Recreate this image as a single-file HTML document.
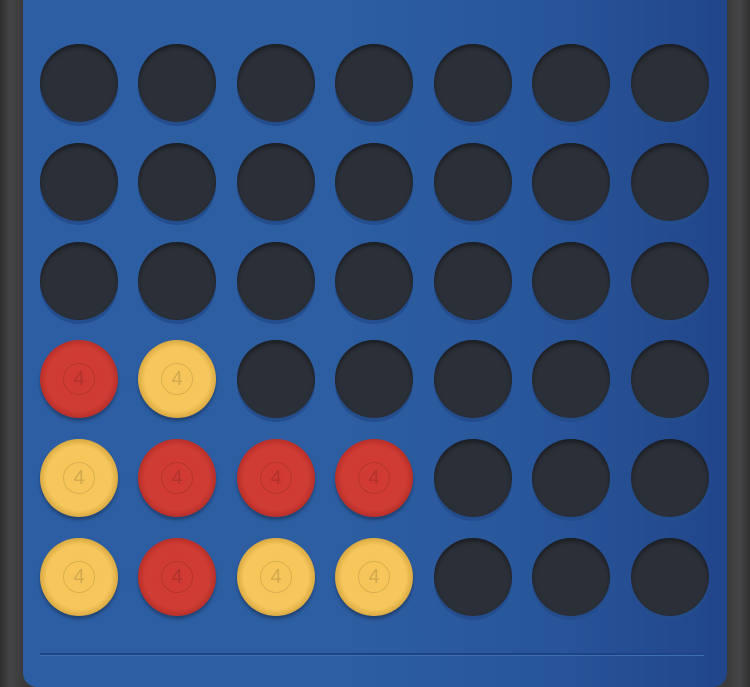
<!DOCTYPE html>
<html><head><style>
html,body{margin:0;padding:0;width:750px;height:687px;overflow:hidden;background:#3b3b3c;}
body{background:linear-gradient(90deg,#2e2e2f 0,#444446 10px,#3a3a3b 23px,#3a3a3b 727px,#454547 740px,#2f2f30 750px);}
#b{position:absolute;left:23px;top:-12px;width:704px;height:699px;border-radius:14px;
background:linear-gradient(90deg,#2d5ea3 0%,#2d5ea2 45%,#28559a 75%,#21458a 100%);}
.h{position:absolute;width:78px;height:78px;border-radius:50%;background:#2b2f37;
box-shadow:0 4px 0 #244d8e,0 3px 4px rgba(0,0,0,.4) inset;}
.r{background:radial-gradient(circle,#d03a33 0,#cf3c34 58%,#b93029 70%,#cc3a33 82%,#a52a24 100%);box-shadow:0 3px 3px rgba(0,0,0,.3);}
.y{background:radial-gradient(circle,#f6c65a 0,#f5c75c 58%,#dcab44 70%,#f2c158 82%,#c99a3a 100%);box-shadow:0 3px 3px rgba(0,0,0,.3);}
.r::after,.y::after{content:"4";position:absolute;left:23px;top:23px;width:30px;height:30px;border-radius:50%;
border:1px solid rgba(0,0,0,.12);font:20px "Liberation Sans",sans-serif;text-align:center;line-height:30px;color:rgba(0,0,0,.15);}
#line{position:absolute;left:40px;top:653px;width:664px;height:2px;background:#1f4482;border-bottom:1px solid #3a6db3;}
</style></head><body>
<div id="b"></div>
<div id="g"></div>
<div id="line"></div>
<script>
var xs=[79,177,276,374,473,571,670],ys=[83,182,281,379,478,577];
var c={"3,0":"r","3,1":"y","4,0":"y","4,1":"r","4,2":"r","4,3":"r","5,0":"y","5,1":"r","5,2":"y","5,3":"y"};
var h="";for(var r=0;r<6;r++)for(var k=0;k<7;k++){h+='<div class="h '+(c[r+","+k]||"")+'" style="left:'+(xs[k]-39)+'px;top:'+(ys[r]-39)+'px"></div>';}
document.getElementById("g").innerHTML=h;
</script>
</body></html>
